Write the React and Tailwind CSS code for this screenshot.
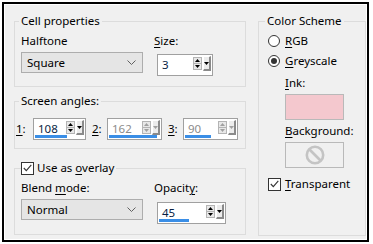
import React from 'react';

const U = ({ children }) => <span className="underline decoration-1 underline-offset-[2px]">{children}</span>;

function Up({ c = '#000' }) {
  return (
    <svg width="5" height="3" viewBox="0 0 5 3" aria-hidden="true">
      <path d="M2.5 0L5 3H0z" fill={c} />
    </svg>
  );
}

function Down({ c = '#000' }) {
  return (
    <svg width="5" height="3" viewBox="0 0 5 3" aria-hidden="true">
      <path d="M0 0H5L2.5 3z" fill={c} />
    </svg>
  );
}

function Chevron() {
  return (
    <svg width="9" height="5" viewBox="0 0 9 5" fill="none" aria-hidden="true">
      <path d="M0.5 0.5L4.5 4.5L8.5 0.5" stroke="#606060" strokeWidth="1" />
    </svg>
  );
}

function Combo({ value }) {
  return (
    <div className="flex h-[21px] w-[122px] items-center justify-between border border-[#adadad] bg-[#e5e5e5] pl-[5px] pr-[6px]">
      <span>{value}</span>
      <Chevron />
    </div>
  );
}

function SpinBox({ value, w, barW = 0, disabled = false }) {
  const arrow = disabled ? '#a0a0a0' : '#000';
  return (
    <div className="flex h-[22px] shrink-0 flex-col border border-[#a0a0a0] bg-white" style={{ width: w }}>
      <div className="flex min-h-0 flex-1">
        <span className={`mt-[2px] flex-1 pl-[4px] leading-[15px] ${disabled ? 'text-[#8c8c8c]' : 'text-[#0a1f44]'}`}>{value}</span>
        <div className="mt-[2px] mb-[1px] flex w-[9px] flex-col border border-[#b4b4b4] bg-[#e8e8e8]">
          <div className="flex flex-1 items-center justify-center border-b border-[#b4b4b4]"><Up c={arrow} /></div>
          <div className="flex flex-1 items-center justify-center"><Down c={arrow} /></div>
        </div>
        <div className="mx-[1px] mt-[1px] flex w-[8px] items-center justify-center border-t border-l border-r-2 border-b-2 border-t-white border-l-white border-r-[#8a8a8a] border-b-[#8a8a8a] bg-[#ececec]">
          <Down c={arrow} />
        </div>
      </div>
      <div className="mb-[1px] ml-[1px] h-[3px] bg-[#3a8ee6]" style={{ width: barW }} />
    </div>
  );
}

function Radio({ checked }) {
  return (
    <div className="flex h-[12px] w-[12px] items-center justify-center rounded-full border border-[#333] bg-white">
      {checked && <div className="h-[6px] w-[6px] rounded-full bg-[#333]" />}
    </div>
  );
}

function Check() {
  return (
    <div className="flex h-[13px] w-[13px] items-center justify-center border border-[#333] bg-white">
      <svg width="9" height="8" viewBox="0 0 9 8" fill="none" aria-hidden="true">
        <path d="M0.8 4L3.3 6.6L8.3 0.8" stroke="#333" strokeWidth="1.1" />
      </svg>
    </div>
  );
}

export default function App() {
  return (
    <div className="h-[244px] w-[373px] bg-white pl-[2px] pt-[2px] font-['Noto_Sans',sans-serif] text-[11.5px] leading-[16px] text-black">
      <div className="h-[240px] w-[367px] border-2 border-black">
        <div className="flex h-full border border-white bg-[#f0f0f0] pl-[9px] pt-[8px]">
          {/* left column */}
          <div className="flex w-[232px] flex-col">
            <fieldset className="h-[74px] border border-[#dcdcdc]">
              <legend className="ml-[4px] px-[2px]">Cell properties</legend>
              <div className="flex pl-[6px] pt-[4px]">
                <div className="flex flex-col">
                  <span>Halftone</span>
                  <div className="mt-[3px]"><Combo value="Square" /></div>
                </div>
                <div className="ml-[11px] flex flex-col">
                  <span><U>S</U>ize:</span>
                  <div className="ml-[3px] mt-[5px]"><SpinBox value="3" w={56} /></div>
                </div>
              </div>
            </fieldset>

            <fieldset className="mt-[6px] h-[56px] border border-[#dcdcdc]">
              <legend className="ml-[4px] px-[2px]">Screen angles:</legend>
              <div className="mt-[9px] flex items-center pl-[1px]">
                <span className="w-[17px]"><U>1</U>:</span>
                <SpinBox value="108" w={53} barW={32} />
                <span className="ml-[6px] w-[15px]"><U>2</U>:</span>
                <SpinBox value="162" w={55} barW={48} disabled />
                <span className="ml-[6px] w-[15px]"><U>3</U>:</span>
                <SpinBox value="90" w={55} barW={26} disabled />
              </div>
            </fieldset>

            <fieldset className="mt-[11px] h-[75px] border border-[#dcdcdc]">
              <legend className="ml-[6px] flex items-center pr-[2px]">
                <Check />
                <span className="ml-[3px]">Use as <U>o</U>verlay</span>
              </legend>
              <div className="flex pl-[6px] pt-[4px]">
                <div className="flex flex-col">
                  <span>Blend <U>m</U>ode:</span>
                  <div className="mt-[3px]"><Combo value="Normal" /></div>
                </div>
                <div className="ml-[11px] flex flex-col">
                  <span>Opacit<U>y</U>:</span>
                  <div className="ml-[3px] mt-[6px]"><SpinBox value="45" w={69} barW={30} /></div>
                </div>
              </div>
            </fieldset>
          </div>

          {/* right column */}
          <fieldset className="ml-[12px] h-[223px] w-[108px] border border-[#dcdcdc]">
            <legend className="ml-[6px] px-[2px]">Color Scheme</legend>
            <div className="flex flex-col pl-[9px] pt-[4px]">
              <div className="flex items-center gap-[5px]">
                <Radio />
                <span><U>R</U>GB</span>
              </div>
              <div className="mt-[4px] flex items-center gap-[5px]">
                <Radio checked />
                <span><U>G</U>reyscale</span>
              </div>
              <span className="ml-[17px] mt-[6px]"><U>I</U>nk:</span>
              <div className="ml-[17px] mt-[3px] h-[26px] w-[59px] border border-[#b9b9b9] bg-[#f4c8ce]" />
              <span className="ml-[17px] mt-[3px]"><U>B</U>ackground:</span>
              <div className="ml-[17px] mt-[3px] flex h-[26px] w-[59px] items-center justify-center border border-[#b9b9b9] bg-[#f0f0f0]">
                <svg width="20" height="20" viewBox="0 0 20 20" fill="none" aria-hidden="true">
                  <circle cx="10" cy="10" r="8.2" stroke="#c4c4c4" strokeWidth="2.6" />
                  <path d="M4.5 4.5L15.5 15.5" stroke="#c4c4c4" strokeWidth="2.6" />
                </svg>
              </div>
              <div className="mt-[8px] flex items-center gap-[4px]">
                <Check />
                <span><U>T</U>ransparent</span>
              </div>
            </div>
          </fieldset>
        </div>
      </div>
    </div>
  );
}
